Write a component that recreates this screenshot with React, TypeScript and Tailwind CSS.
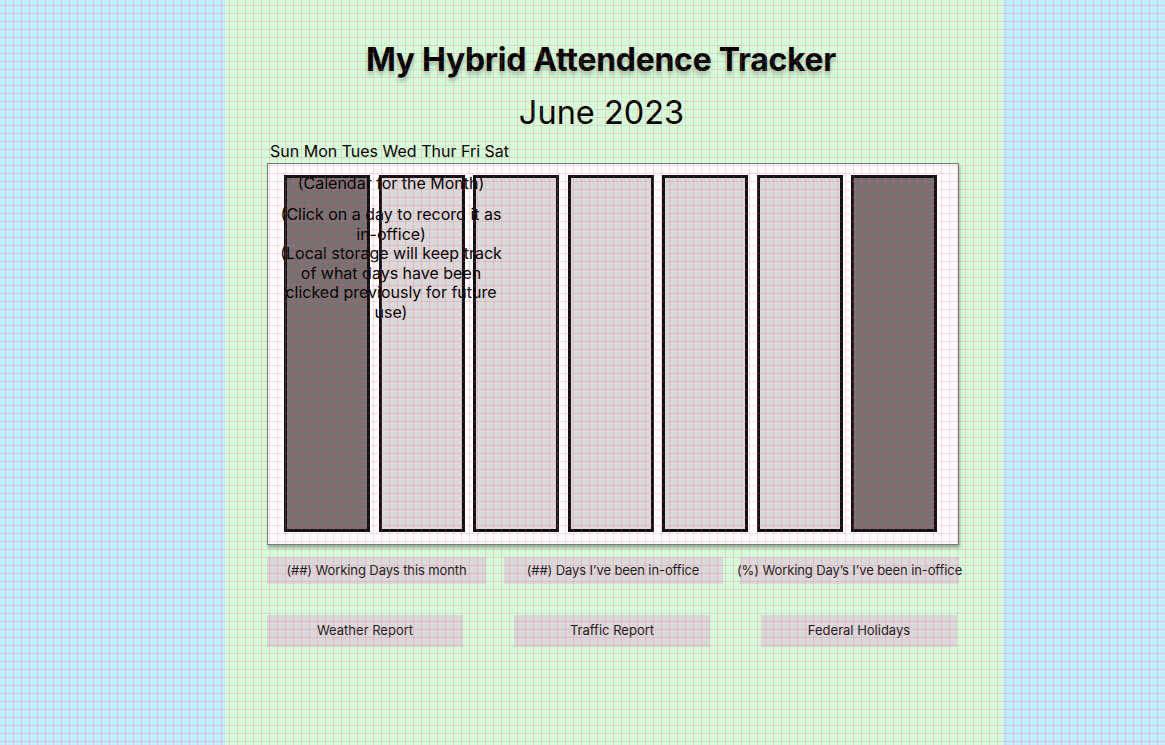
import React from 'react';

const days = ['Sun', 'Mon', 'Tues', 'Wed', 'Thur', 'Fri', 'Sat'];

const stats = [
  '(##) Working Days this month',
  '(##) Days I’ve been in-office',
  '(%) Working Day’s I’ve been in-office',
];

const links = ['Weather Report', 'Traffic Report', 'Federal Holidays'];

const App = () => {
  return (
    <div className="relative min-h-[745px] w-full bg-[#c1eefa] font-['Inter',sans-serif] text-black">
      {/* green page column */}
      <div className="ml-[225px] w-[778px] min-h-[745px] bg-[#d5fdd9] pl-[42px] pr-[44px]">
        <h1 className="mr-[24px] pt-[40px] text-center text-[32px] font-bold leading-[39px] tracking-[-0.3px] [text-shadow:0_4px_4px_rgba(0,0,0,0.25)]">
          My Hybrid Attendence Tracker
        </h1>
        <h2 className="mr-[23px] mt-[13px] text-center text-[32.5px] leading-[41px]">June 2023</h2>

        <div className="mt-[9px] pl-[3px] text-[16px] leading-[19px]">{days.join(' ')}</div>

        {/* calendar */}
        <div className="relative mt-[2px] h-[382px] border border-[#7a7a7a] bg-white pl-[16px] pt-[11px] shadow-[1px_3px_3px_rgba(0,0,0,0.3)]">
          <div className="flex gap-[8.5px]">
            {days.map((d, i) => (
              <div
                key={d}
                className={
                  i === 0 || i === 6
                    ? 'h-[357px] w-[86px] border-[3px] border-[#111] bg-[#787171]'
                    : 'h-[357px] w-[86px] border-[3px] border-[#111] bg-[#dad8d8]'
                }
              />
            ))}
          </div>
          <div className="absolute left-[6px] top-[10px] w-[234px] text-center text-[16px] leading-[19.5px]">
            <p>(Calendar for the Month)</p>
            <p className="mt-[11.5px]">(Click on a day to record it as in-office)</p>
            <p>(Local storage will keep track of what days have been clicked previously for future use)</p>
          </div>
        </div>

        <div className="mt-[12px] flex justify-between">
          {stats.map((s) => (
            <div
              key={s}
              className="flex h-[27px] w-[219px] items-center justify-center whitespace-nowrap bg-[#dad8d8] text-[13px] tracking-[-0.1px] text-[#1a1a1a]"
            >
              {s}
            </div>
          ))}
        </div>

        <div className="mt-[31px] flex justify-between pr-[2px]">
          {links.map((l) => (
            <div
              key={l}
              className="flex h-[32px] w-[196px] items-center justify-center bg-[#dad8d8] text-[13px] text-[#1a1a1a]"
            >
              {l}
            </div>
          ))}
        </div>
      </div>

      {/* layout grid overlay */}
      <div className="pointer-events-none absolute inset-0 bg-[linear-gradient(to_right,rgba(230,90,130,0.22)_1px,transparent_1px),linear-gradient(to_bottom,rgba(230,90,130,0.22)_1px,transparent_1px)] bg-size-[8px_8px] bg-position-[5px_5px]" />
    </div>
  );
};

export default App;
